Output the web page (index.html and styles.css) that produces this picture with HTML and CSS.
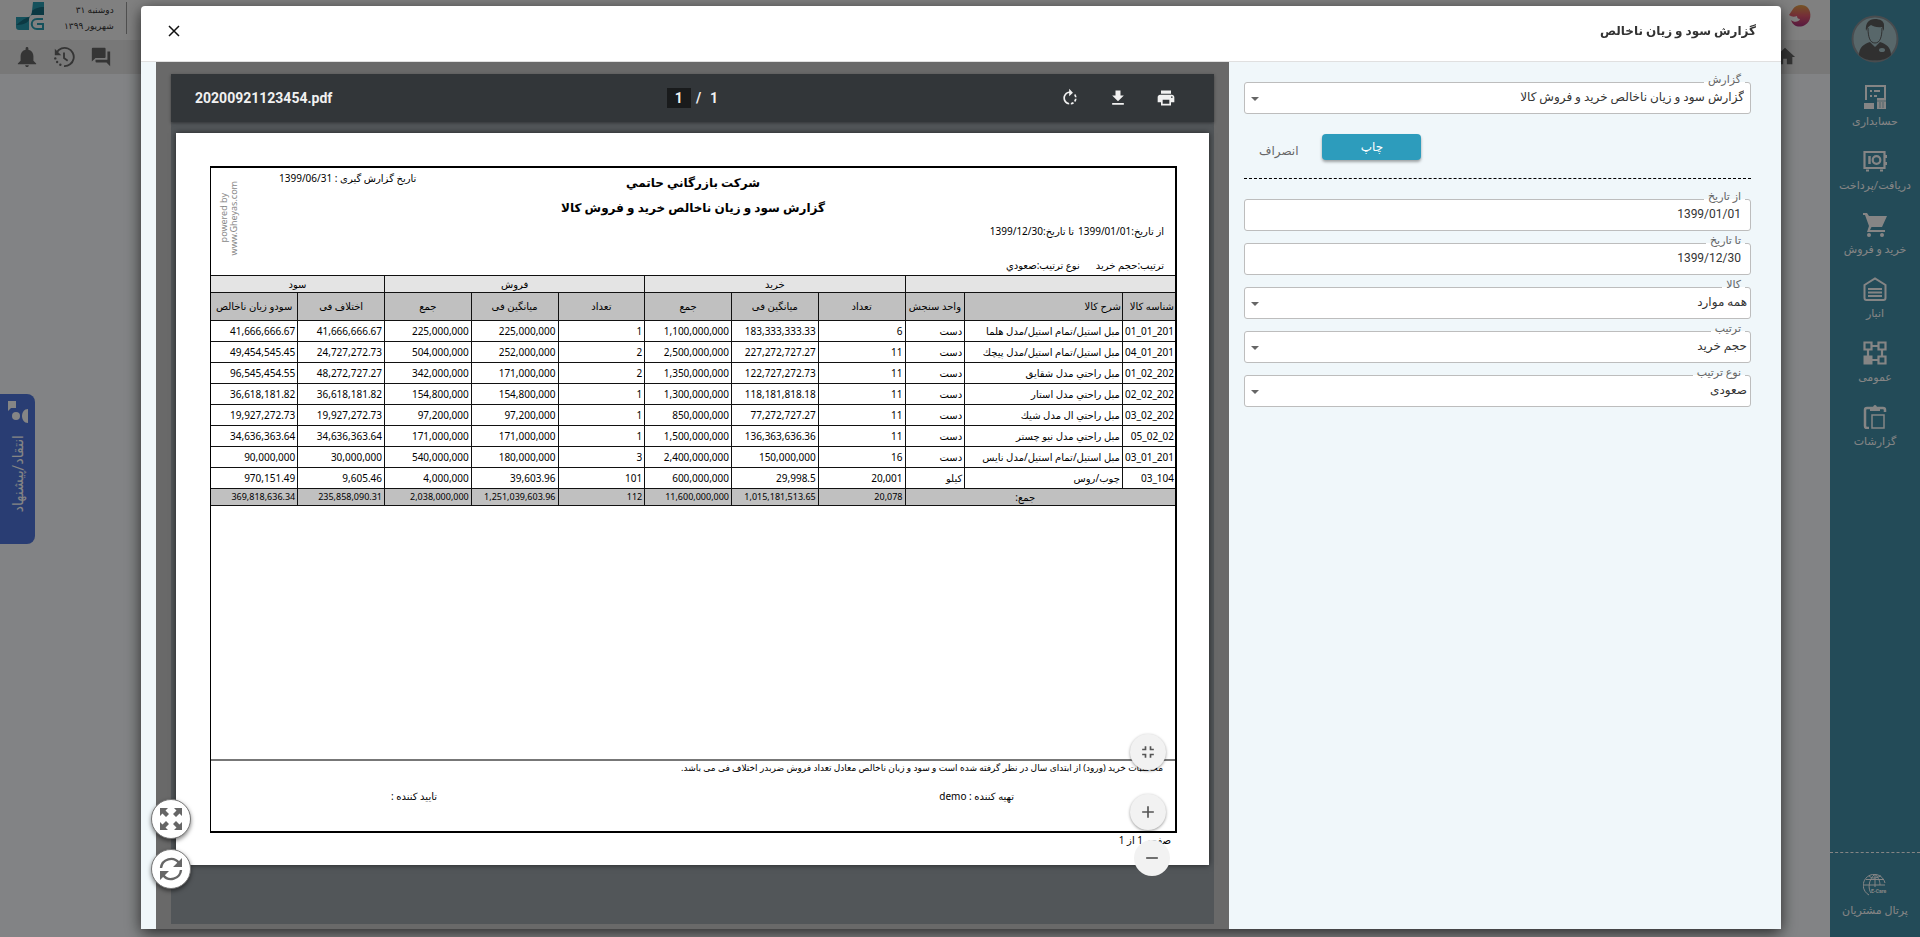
FILE: index.html
```html
<!DOCTYPE html>
<html lang="fa" dir="rtl">
<head>
<meta charset="utf-8">
<title>گزارش سود و زیان ناخالص</title>
<link rel="stylesheet" href="styles.css">
</head>
<body>
<div class="app">
  <nav class="sidebar">
    <svg class="avatar" viewBox="0 0 48 48" aria-hidden="true">
      <circle cx="24" cy="24" r="22.5" fill="#a9c6cc" stroke="#8a9298" stroke-width="2"/>
      <path d="M8 40c0-8 5-11 11-13l5 5 5-5c6 2 11 5 11 13-4 4-9 5.500-16 5.500S12 44 8 40z" fill="#5c5c5c"/>
      <path d="M17 13c0 9 2 15 7 15s7-6 7-15" fill="#a9c6cc" stroke="#5c5c5c"/>
      <path d="M15 16c-1-8 3-12 9-12 5 0 9 2 9 6v6l-2-4c-5 1-9-1-11-2-2 1-4 3-5 6z" fill="#5c5c5c"/>
      <ellipse cx="31" cy="35" rx="3" ry="2" fill="#a9c6cc"/>
    </svg>
    <a class="nav-item" href="#">
      <svg viewBox="0 0 24 24" aria-hidden="true"><path d="M3 15V1h19v13" fill="none" stroke="currentColor" stroke-width="2"/><path d="M7 6h2M11 6h6M7 11h2M11 11h3" stroke="currentColor" stroke-width="2"/><path d="M1 18h10v6H1zM14 13h9v11h-9z" fill="currentColor"/><path d="M14 16h9M17 17v6M20 17v6" stroke="#4390a9" stroke-width=".6"/></svg>
      <span>حسابداری</span>
    </a>
    <a class="nav-item" href="#">
      <svg viewBox="0 0 24 24" aria-hidden="true"><path d="M1.500 3h20v16h-20z" fill="none" stroke="currentColor" stroke-width="2.200"/><path d="M6.500 7v8" stroke="currentColor" stroke-width="2.500"/><circle cx="13.500" cy="11" r="3.800" fill="none" stroke="currentColor" stroke-width="2.200"/><path d="M23 6v3M23 13v3M3 21.500h3M17 21.500h3" stroke="currentColor" stroke-width="2"/></svg>
      <span>دریافت/پرداخت</span>
    </a>
    <a class="nav-item" href="#">
      <svg viewBox="0 0 24 24" aria-hidden="true"><path d="M0 0h4l2 3h18l-5 11H8.500L7 17h15v2H4l2-6L2 2H0z" fill="currentColor"/><circle cx="6" cy="22" r="2" fill="currentColor"/><circle cx="19" cy="22" r="2" fill="currentColor"/></svg>
      <span>خرید و فروش</span>
    </a>
    <a class="nav-item" href="#">
      <svg viewBox="0 0 24 24" aria-hidden="true"><path d="M1.500 8 12 1.500 22.500 8v13c0 1-1 2-2 2h-17c-1 0-2-1-2-2z" fill="none" stroke="currentColor" stroke-width="2"/><path d="M5 12h14M5 15.500h14M5 19h14" stroke="currentColor" stroke-width="2"/></svg>
      <span>انبار</span>
    </a>
    <a class="nav-item" href="#">
      <svg viewBox="0 0 24 24" aria-hidden="true"><path d="M1.500 1.500h7v7h-7zM15.500 1.500h7v7h-7zM15.500 15.500h7v7h-7zM8.500 5h7M5 8.500v7M19 8.500v7M8.500 19h7" fill="none" stroke="currentColor" stroke-width="2.200"/><path d="M.5 14.500h9v9h-9z" fill="currentColor"/></svg>
      <span>عمومی</span>
    </a>
    <a class="nav-item" href="#">
      <svg viewBox="0 0 24 24" aria-hidden="true"><path d="M6 23H4c-1 0-2-.7-2-2V5c0-1 .7-2 2-2h16c1 0 2 .7 2 2v2" fill="none" stroke="currentColor" stroke-width="2.500"/><path d="M7 3h3c0-4 4-4 4 0h3v3H7z" fill="currentColor"/><path d="M9 10h12v13H9z" fill="none" stroke="currentColor" stroke-width="1.500"/></svg>
      <span>گزارشات</span>
    </a>
    <a class="nav-item nav-portal" href="#">
      <svg viewBox="0 0 24 24" aria-hidden="true"><path d="M6 21A11 11 0 1 1 22 9M1 11h21M3 5.500h18M6 1.800c3 3 6 3 12 0M12 0v13M12 0C5 6 5 15 8 19M12 0c4 4 5 8 5 11" fill="none" stroke="currentColor"/><text x="8" y="19" font-size="5" font-weight="bold" font-family="Roboto, sans-serif" fill="currentColor" direction="ltr">E-Care</text></svg>
      <span>پرتال مشتریان</span>
    </a>
  </nav>
  <main class="workspace">
    <header class="topbar">
      <svg class="brand" viewBox="0 0 24 24" aria-hidden="true">
        <defs><linearGradient id="flame" x1="0" y1="0" x2="0" y2="1"><stop offset="0" stop-color="#e0a048"/><stop offset=".5" stop-color="#e0586c"/><stop offset="1" stop-color="#a8327c"/></linearGradient></defs>
        <path d="M1 11 5 5c3-5 12-5 15-1 4 5 3 14-3 17-5 3-12 2-14-5 3 3 8 2 9-1-2 0-3-1-3-3-3 1-5 1-8-1z" fill="url(#flame)"/>
      </svg>
      <div class="date-block">
        <p class="today"><span>دوشنبه ۳۱</span><span>شهریور ۱۳۹۹</span></p>
        <svg class="logo" viewBox="0 0 28 28" aria-hidden="true">
          <path d="M17 0h11v13H17c-3 0-4 2-4 5v10H3c-2 0-3-1-3-3V15h11c4 0 5-2 5-6z" fill="#2a9cb0"/>
          <path d="M16 9c2-2 6-4 12-4v8H17c-3 0-4 2-4 5-2 4-8 5-13 5 4-3 7-6 13-8 2-1 3-4 3-6z" fill="#176d80"/>
          <path d="M27 17h-6c-7 0-7 10 0 10h6v-5h-6" fill="none" stroke="#2a9cb0" stroke-width="2"/>
        </svg>
      </div>
    </header>
    <div class="toolbar">
      <svg class="tool" viewBox="0 0 24 24" aria-hidden="true"><path d="M10 20v-6h4v6h6v-8h3L12 2 1 12h3v8z"/></svg>
      <div class="tools">
        <svg class="tool" viewBox="0 0 24 24" aria-hidden="true"><path d="M22 6h-3v9H6v2c0 .6.400 1 1 1h11l4 4zm-5 6V3c0-.6-.4-1-1-1H3c-.6 0-1 .4-1 1v14l4-4h10c.6 0 1-.4 1-1z"/></svg>
        <svg class="tool" viewBox="0 0 24 24" aria-hidden="true"><path d="M4 7a10 10 0 1 1 8 15" fill="none" stroke="currentColor" stroke-width="2"/><path d="M2 3v7h7z"/><path d="M12 7v6l4 3" fill="none" stroke="currentColor" stroke-width="2"/><circle cx="8" cy="20.500" r="1.300"/><circle cx="4.500" cy="17.500" r="1.300"/><circle cx="2.500" cy="13.500" r="1.300"/></svg>
        <svg class="tool" viewBox="0 0 24 24" aria-hidden="true"><path d="M12 23c1.200 0 2-.9 2-2h-4c0 1.100.9 2 2 2zm7-7v-5c0-3.500-2-6.300-5.500-7V2.500c0-2-3-2-3 0V4C7 4.700 5 7.500 5 11v5l-3 3v1h20v-1z"/></svg>
      </div>
    </div>
  </main>
  <button class="feedback" type="button">
    <svg viewBox="0 0 24 24" aria-hidden="true"><path d="M2 2h8v7H5l-3 3z"/><circle cx="10" cy="17" r="4"/><path d="M22 10v14c-8 0-8-14 0-14z"/></svg>
    <span>انتقاد/پیشنهاد</span>
  </button>
</div>

<div class="backdrop">
  <section class="dialog" role="dialog" aria-labelledby="dialog-title">
    <header class="dialog-head">
      <h1 id="dialog-title">گزارش سود و زیان ناخالص</h1>
      <button class="close" type="button" aria-label="بستن"><svg viewBox="0 0 12 12"><path d="M1 1l10 10M11 1L1 11" stroke="currentColor" stroke-width="1.500"/></svg></button>
    </header>
    <div class="dialog-body">
      <form class="filters">
        <div class="field select"><label for="report">گزارش</label><select id="report" class="inset"><option>گزارش سود و زیان ناخالص خرید و فروش کالا</option></select></div>
        <div class="actions">
          <button class="primary" type="button">چاپ</button>
          <button class="plain" type="button">انصراف</button>
        </div>
        <div class="field"><label for="from">از تاریخ</label><input id="from" type="text" value="1399/01/01"></div>
        <div class="field"><label for="to">تا تاریخ</label><input id="to" type="text" value="1399/12/30"></div>
        <div class="field select"><label for="goods">کالا</label><select id="goods"><option>همه موارد</option></select></div>
        <div class="field select"><label for="sort">ترتیب</label><select id="sort"><option>حجم خرید</option></select></div>
        <div class="field select"><label for="order">نوع ترتیب</label><select id="order"><option>صعودی</option></select></div>
      </form>

      <div class="viewer">
        <div class="pdf">
          <div class="pdf-bar" dir="ltr">
            <span class="file">20200921123454.pdf</span>
            <div class="pager"><input type="text" value="1" aria-label="صفحه"><span>/</span><span>1</span></div>
            <div class="pdf-tools">
              <button type="button" aria-label="چرخش"><svg viewBox="0 0 24 24"><path d="M15.550 5.550L11 1v3.070C7.060 4.560 4 7.920 4 12s3.050 7.440 7 7.930v-2.020c-2.840-.48-5-2.940-5-5.910s2.160-5.430 5-5.910V10zM19.930 11c-.17-1.390-.72-2.730-1.620-3.890l-1.420 1.420c.54.75.88 1.600 1.020 2.470zM13 17.900v2.020c1.390-.17 2.740-.71 3.900-1.610l-1.440-1.440c-.75.54-1.590.89-2.460 1.030zm3.890-2.420l1.420 1.410c.9-1.160 1.450-2.500 1.620-3.890h-2.020c-.14.87-.48 1.720-1.020 2.480z"/></svg></button>
              <button type="button" aria-label="دانلود"><svg viewBox="0 0 24 24"><path d="M19 9h-4V3H9v6H5l7 7 7-7zM5 18v2h14v-2H5z"/></svg></button>
              <button type="button" aria-label="چاپ سند"><svg viewBox="0 0 24 24"><path d="M19 8H5c-1.660 0-3 1.340-3 3v6h4v4h12v-4h4v-6c0-1.660-1.340-3-3-3zm-3 11H8v-5h8v5zm3-7c-.55 0-1-.45-1-1s.45-1 1-1 1 .45 1 1-.45 1-1 1zm-1-9H6v4h12V3z"/></svg></button>
            </div>
          </div>
          <article class="sheet">
            <div class="frame">
              <header class="report-head">
                <div class="criteria">
                  <p><span>از تاریخ:<bdi>1399/01/01</bdi></span><span>تا تاریخ:<bdi>1399/12/30</bdi></span></p>
                  <p class="sorting"><span>ترتیب:حجم خرید</span><span>نوع ترتیب:صعودي</span></p>
                </div>
                <div class="titles"><h2>شرکت بازرگاني حاتمي</h2><h2>گزارش سود و زیان ناخالص خرید و فروش کالا</h2></div>
                <div class="stamp">
                  <p>تاریخ گزارش گیری : <bdi>1399/06/31</bdi></p>
                  <p class="powered" dir="ltr">powered by<br>www.Gheyas.com</p>
                </div>
              </header>
              <table>
                <colgroup><col class="c-id"><col class="c-name"><col class="c-unit"><col><col><col><col><col><col><col><col></colgroup>
                <thead>
                  <tr class="groups"><th colspan="3"></th><th colspan="3">خرید</th><th colspan="3">فروش</th><th colspan="2">سود</th></tr>
                  <tr class="heads"><th class="start">شناسه کالا</th><th class="start">شرح کالا</th><th>واحد سنجش</th><th>تعداد</th><th>میانگین فی</th><th>جمع</th><th>تعداد</th><th>میانگین فی</th><th>جمع</th><th>اختلاف فی</th><th>سودو زیان ناخالص</th></tr>
                </thead>
                <tbody>
                  <tr><td>01_01_201</td><td>مبل استیل/تمام استیل/مدل هلما</td><td>دست</td><td>6</td><td>183,333,333.33</td><td>1,100,000,000</td><td>1</td><td>225,000,000</td><td>225,000,000</td><td>41,666,666.67</td><td>41,666,666.67</td></tr>
                  <tr><td>04_01_201</td><td>مبل استیل/تمام استیل/مدل پیچك</td><td>دست</td><td>11</td><td>227,272,727.27</td><td>2,500,000,000</td><td>2</td><td>252,000,000</td><td>504,000,000</td><td>24,727,272.73</td><td>49,454,545.45</td></tr>
                  <tr><td>01_02_202</td><td>مبل راحتي مدل شقایق</td><td>دست</td><td>11</td><td>122,727,272.73</td><td>1,350,000,000</td><td>2</td><td>171,000,000</td><td>342,000,000</td><td>48,272,727.27</td><td>96,545,454.55</td></tr>
                  <tr><td>02_02_202</td><td>مبل راحتي مدل استار</td><td>دست</td><td>11</td><td>118,181,818.18</td><td>1,300,000,000</td><td>1</td><td>154,800,000</td><td>154,800,000</td><td>36,618,181.82</td><td>36,618,181.82</td></tr>
                  <tr><td>03_02_202</td><td>مبل راحتي ال مدل شیك</td><td>دست</td><td>11</td><td>77,272,727.27</td><td>850,000,000</td><td>1</td><td>97,200,000</td><td>97,200,000</td><td>19,927,272.73</td><td>19,927,272.73</td></tr>
                  <tr><td>05_02_02</td><td>مبل راحتي مدل نیو چستر</td><td>دست</td><td>11</td><td>136,363,636.36</td><td>1,500,000,000</td><td>1</td><td>171,000,000</td><td>171,000,000</td><td>34,636,363.64</td><td>34,636,363.64</td></tr>
                  <tr><td>03_01_201</td><td>مبل استیل/تمام استیل/مدل نایس</td><td>دست</td><td>16</td><td>150,000,000</td><td>2,400,000,000</td><td>3</td><td>180,000,000</td><td>540,000,000</td><td>30,000,000</td><td>90,000,000</td></tr>
                  <tr><td>03_104</td><td>چوب/روس</td><td>کیلو</td><td>20,001</td><td>29,998.5</td><td>600,000,000</td><td>101</td><td>39,603.96</td><td>4,000,000</td><td>9,605.46</td><td>970,151.49</td></tr>
                </tbody>
                <tfoot>
                  <tr><th colspan="3">جمع:</th><td>20,078</td><td>1,015,181,513.65</td><td>11,600,000,000</td><td>112</td><td>1,251,039,603.96</td><td>2,038,000,000</td><td>235,858,090.31</td><td>369,818,636.34</td></tr>
                </tfoot>
              </table>
              <footer class="report-foot">
                <p class="note">محاسبات خرید (ورود) از ابتدای سال در نظر گرفته شده است و سود و زیان ناخالص معادل تعداد فروش ضربدر اختلاف فی می باشد.</p>
                <div class="signs"><span>تهیه کننده : demo</span><span>تایید کننده :</span></div>
              </footer>
            </div>
            <p class="page-no">صفحه 1 از 1</p>
          </article>
          <div class="zoomers">
            <button type="button" class="fit" aria-label="اندازه صفحه"><svg viewBox="0 0 24 24"><path d="M5 16h3v3h2v-5H5v2zm3-8H5v2h5V5H8v3zm6 11h2v-3h3v-2h-5v5zm2-11V5h-2v5h5V8h-3z"/></svg></button>
            <button type="button" aria-label="بزرگ‌نمایی"><svg viewBox="0 0 24 24"><path d="M19 13h-6v6h-2v-6H5v-2h6V5h2v6h6v2z"/></svg></button>
            <button type="button" class="out" aria-label="کوچک‌نمایی"><svg viewBox="0 0 24 24"><path d="M19 13H5v-2h14v2z"/></svg></button>
          </div>
        </div>
        <div class="floaters">
          <button type="button" aria-label="تمام صفحه"><svg viewBox="0 0 24 24"><path d="M1 1h8L6.500 3.500 10 7 7 10 3.500 6.500 1 9zM23 1v8l-2.500-2.500L17 10l-3-3 3.500-3.500L15 1zM1 23v-8l2.500 2.500L7 14l3 3-3.500 3.500L9 23zM23 23h-8l2.500-2.500L14 17l3-3 3.500 3.500L23 15z"/></svg></button>
          <button type="button" aria-label="بارگذاری مجدد"><svg viewBox="0 0 24 24"><path d="M2 11A10 10 0 0 1 20 6M22 13A10 10 0 0 1 4 18" fill="none" stroke="currentColor" stroke-width="2.400"/><path d="M23 1v9h-9zM1 23v-9h9z"/></svg></button>
        </div>
      </div>
    </div>
  </section>
</div>
</body>
</html>
```
FILE: styles.css
```css
* { box-sizing: border-box; }

body {
  margin: 0;
  font-family: Roboto, "DejaVu Sans", sans-serif;
  font-size: 12px;
  color: #333;
  overflow: hidden;
}

h1, h2, p { margin: 0; }

button, input, select { font: inherit; color: inherit; }

button { border: 0; padding: 0; cursor: pointer; }

svg { display: block; fill: currentColor; }

/* Application behind the dialog */
.app {
  display: flex;
  min-height: 100vh;
  background: #f9fcff;
}

.sidebar {
  display: flex;
  flex-direction: column;
  align-items: stretch;
  width: 90px;
  padding-top: 15px;
  background: #4390a9;
  color: #fff;
}

.avatar { width: 48px; height: 48px; margin: 0 auto 22px; }

.nav-item {
  display: flex;
  flex-direction: column;
  align-items: center;
  gap: 4px;
  height: 64px;
  color: #fff;
  text-decoration: none;
  font-size: 11px;
  line-height: 18px;
  white-space: nowrap;
}

.nav-item svg { width: 24px; height: 24px; }

.nav-portal {
  height: 85px;
  margin-top: auto;
  padding-top: 21px;
  border-top: 1px dashed #fff;
}

.workspace { flex: 1; }

.topbar {
  display: flex;
  justify-content: space-between;
  height: 40px;
  padding: 2px 18px 2px 16px;
  background: #f6f6f6;
}

.brand { width: 24px; height: 24px; margin-top: 2px; }

.date-block { display: flex; gap: 20px; align-items: flex-start; }

.today {
  display: flex;
  flex-direction: column;
  padding-right: 12px;
  border-right: 1px solid #999;
  font-size: 9px;
  line-height: 16px;
}

.logo { width: 28px; height: 28px; }

.toolbar {
  display: flex;
  justify-content: space-between;
  align-items: center;
  height: 34px;
  padding: 0 34px 0 16px;
  background: #e6e6e6;
  color: #666;
}

.tools { display: flex; gap: 15px; }

.tool { width: 22px; height: 22px; }

.feedback {
  position: absolute;
  left: 0;
  top: 394px;
  display: flex;
  flex-direction: column;
  align-items: center;
  gap: 12px;
  width: 35px;
  height: 150px;
  padding: 5px 0;
  border-radius: 0 8px 8px 0;
  background: #4f76dc;
  color: #fff;
  font-size: 14px;
}

.feedback svg { width: 24px; height: 24px; }

.feedback span {
  writing-mode: vertical-rl;
  transform: rotate(180deg);
  white-space: nowrap;
}

/* Dialog */
.backdrop {
  position: fixed;
  inset: 0;
  display: flex;
  padding: 6px 139px 8px 141px;
  background: rgba(0, 0, 0, .48);
}

.dialog {
  flex: 1;
  display: flex;
  flex-direction: column;
  border-radius: 4px 4px 0 0;
  background: #fff;
  box-shadow: 0 4px 16px rgba(0, 0, 0, .7);
}

.dialog-head {
  display: flex;
  align-items: center;
  justify-content: space-between;
  height: 56px;
  padding: 0 25px 6px 27px;
  border-bottom: 1px solid #e0e0e0;
}

.dialog-head h1 { font-size: 12px; font-weight: bold; }

.close { background: none; color: #111; }

.close svg { width: 12px; height: 12px; }

.dialog-body {
  flex: 1;
  display: flex;
  min-height: 0;
  padding-left: 15px;
  background: #f0f7fa;
}

.filters {
  display: flex;
  flex-direction: column;
  gap: 12px;
  width: 552px;
  padding: 20px 30px 0 15px;
}

.field { position: relative; }

.field label {
  position: absolute;
  top: -11px;
  right: 6px;
  padding: 0 4px;
  background: linear-gradient(#f0f7fa 60%, #fff 60%);
  color: #666;
  font-size: 11px;
  line-height: 18px;
}

.field input, .field select {
  display: block;
  width: 100%;
  height: 32px;
  padding: 0 9px 2px;
  border: 1px solid #bdbdbd;
  border-radius: 3px;
  background: #fff;
  color: #333;
  font-size: 12px;
}

.field select { appearance: none; padding: 0 3px 2px 24px; }

.field select.inset { padding-right: 6px; }

.select::after {
  content: "";
  position: absolute;
  left: 7px;
  top: 15px;
  border: 4px solid transparent;
  border-top-color: #666;
  border-bottom: 0;
  pointer-events: none;
}

.actions {
  display: flex;
  justify-content: flex-end;
  align-items: flex-start;
  gap: 24px;
  margin-bottom: 8px;
  padding: 8px 0 18px 15px;
  border-bottom: 1px dashed #000;
}

.primary {
  width: 99px;
  height: 26px;
  border-radius: 4px;
  background: #2d9cbc;
  box-shadow: 0 2px 3px rgba(0, 0, 0, .35);
  color: #fff;
}

.plain { padding-top: 8px; background: none; color: #666; line-height: 18px; }

/* Document viewer */
.viewer {
  position: relative;
  flex: 1;
  padding: 12px 15px 5px 15px;
  background: #696969;
}

.pdf {
  position: relative;
  height: 100%;
  background: #525659;
  color: #000;
}

.pdf-bar {
  display: grid;
  grid-template-columns: 1fr auto 1fr;
  align-items: center;
  height: 48px;
  padding: 0 24px;
  background: #323639;
  box-shadow: 0 1px 3px rgba(0, 0, 0, .4);
  color: #f1f1f1;
  font-size: 14px;
  font-weight: bold;
}

.pager { display: flex; align-items: center; gap: 5px; }

.pager input {
  width: 24px;
  height: 20px;
  padding: 0;
  border: 0;
  background: #191b1c;
  text-align: center;
}

.pager span + span { padding-left: 4px; }

.pdf-tools {
  display: flex;
  justify-content: flex-end;
  gap: 24px;
  padding-right: 12px;
}

.pdf-tools button, .pdf-tools svg { width: 24px; height: 24px; }

.pdf-tools svg { padding: 2px; }

.pdf-tools button { background: none; }

.sheet {
  display: flex;
  flex-direction: column;
  aspect-ratio: 24 / 17;
  margin: 11px 5px 0;
  padding: 33px 32px 18px 34px;
  background: #fff;
  box-shadow: 0 0 6px rgba(0, 0, 0, .6);
  font-family: "Noto Sans", "DejaVu Sans", sans-serif;
  font-size: 10px;
  line-height: 14px;
}

.frame {
  flex: 1;
  display: flex;
  flex-direction: column;
  border: 1px solid #000;
  border-width: 2px 2px 2px 1px;
}

.report-head {
  display: grid;
  grid-template-columns: 1fr auto 1fr;
  height: 107px;
}

.criteria { padding: 56px 11px 0 0; }

.criteria p { display: flex; gap: 4px; }

.criteria .sorting { gap: 16px; margin-top: 20px; }

.titles { padding-top: 2px; text-align: center; }

.titles h2 { font-size: 12px; line-height: 25px; white-space: nowrap; }

.stamp {
  display: flex;
  justify-content: flex-end;
  gap: 40px;
  padding: 3px 0 0 8px;
}

.powered {
  writing-mode: vertical-rl;
  transform: rotate(180deg);
  align-self: flex-start;
  margin-top: 10px;
  color: #888;
  font-size: 9px;
  line-height: 10px;
  text-align: center;
}

table { width: 100%; table-layout: fixed; border-collapse: collapse; }

col { width: 9%; }

col.c-id { width: 52px; }

col.c-name { width: 156px; }

col.c-unit { width: 59px; }

th, td {
  overflow: hidden;
  padding: 0 2px;
  border: 1px solid #111;
  white-space: nowrap;
  font-weight: normal;
}

td { height: 21px; text-align: right; direction: ltr; }

td:first-child { padding: 0 1px; }

td:nth-child(2), td:nth-child(3) { direction: rtl; }

tr > :first-child { border-right: 0; }

tr > :last-child { border-left: 0; }

.groups th { height: 17px; background: #e4e4e4; }

.heads th { height: 28px; padding: 0 1px 2px; background: #c0c0c0; }

.heads .start { text-align: right; }

tfoot th, tfoot td {
  height: 17px;
  background: #c0c0c0;
  font-size: 9px;
}

tfoot th { padding-right: 32px; font-size: 10px; }

tfoot td:nth-child(n) { direction: ltr; }

.report-foot {
  height: 72px;
  margin-top: auto;
  border-top: 2px solid #777;
}

.note { padding-right: 12px; font-size: 9px; }

.signs { display: flex; padding: 14px 161px 0 0; }

.signs span { flex: 0 0 577px; }

.signs span:last-child { flex: 1; }

.page-no { padding-right: 6px; line-height: 14px; }

/* Floating controls over the document */
.zoomers {
  position: absolute;
  right: 48px;
  bottom: 48px;
  display: flex;
  flex-direction: column;
}

.zoomers button {
  display: grid;
  place-items: center;
  width: 36px;
  height: 36px;
  border-radius: 50%;
  background: #f2f2f2;
  box-shadow: 0 1px 3px rgba(0, 0, 0, .4);
  color: #555;
}

.zoomers svg { width: 20px; height: 20px; }

.zoomers .fit { margin-bottom: 24px; }

.zoomers .out { margin: 10px -4px 0 4px; box-shadow: none; }

.floaters {
  position: absolute;
  left: -5px;
  bottom: 40px;
  display: flex;
  flex-direction: column;
  gap: 10px;
}

.floaters button {
  display: grid;
  place-items: center;
  width: 40px;
  height: 40px;
  border: 1px solid #777;
  border-radius: 50%;
  background: #fff;
  box-shadow: 0 2px 4px rgba(0, 0, 0, .5);
  color: #666;
}

.floaters svg { width: 24px; height: 24px; }
```
